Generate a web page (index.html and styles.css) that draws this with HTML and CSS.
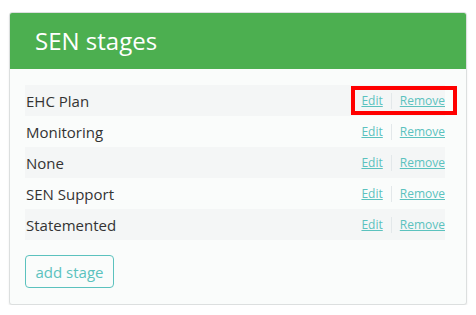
FILE: index.html
```html
<!DOCTYPE html>
<html lang="en">
<head>
    <meta charset="UTF-8">
    <meta name="viewport" content="width=device-width, initial-scale=1.0">
    <title>SEN stages</title>
    <link rel="stylesheet" href="styles.css">
</head>
<body>
    <!-- Panel -->
    <div class="panel">
        <div class="panel-heading">SEN stages</div>
        <div class="panel-body">
            <ul class="stage-list">
                <li class="stage">
                    <span class="stage-name">EHC Plan</span>
                    <span class="actions highlighted">
                        <a href="#">Edit</a><span class="sep"></span><a href="#">Remove</a>
                        <span class="mark"></span>
                    </span>
                </li>
                <li class="stage">
                    <span class="stage-name">Monitoring</span>
                    <span class="actions"><a href="#">Edit</a><span class="sep"></span><a href="#">Remove</a></span>
                </li>
                <li class="stage">
                    <span class="stage-name">None</span>
                    <span class="actions"><a href="#">Edit</a><span class="sep"></span><a href="#">Remove</a></span>
                </li>
                <li class="stage">
                    <span class="stage-name">SEN Support</span>
                    <span class="actions"><a href="#">Edit</a><span class="sep"></span><a href="#">Remove</a></span>
                </li>
                <li class="stage">
                    <span class="stage-name">Statemented</span>
                    <span class="actions"><a href="#">Edit</a><span class="sep"></span><a href="#">Remove</a></span>
                </li>
            </ul>
            <button type="button" class="btn-add">add stage</button>
        </div>
    </div>
</body>
</html>
```

FILE: styles.css
```css
body {
    font-family: 'Open Sans', sans-serif;
    color: #333;
    background: #fff;
    margin: 0;
    padding: 12px 9px 0 9px;
}
.panel {
    border: 1px solid #dcdfdf;
    border-radius: 3px;
    background-color: #fafcfb;
    box-shadow: 0 2px 2px rgba(0, 0, 0, 0.08);
    overflow: hidden;
}
.panel-heading {
    background-color: #4caf50;
    color: #fff;
    font-size: 24px;
    height: 56px;
    line-height: 56px;
    padding-left: 25px;
}
.panel-body {
    padding: 16px 21px 16px 15px;
}
.stage-list {
    list-style: none;
    margin: 0 0 15px 0;
    padding: 0;
}
.stage {
    display: flex;
    justify-content: space-between;
    align-items: center;
    height: 31px;
    padding-left: 1px;
    font-size: 15px;
}
.stage:nth-child(odd) {
    background-color: #f4f6f6;
}
.actions {
    display: flex;
    align-items: center;
    font-size: 12px;
    position: relative;
}
.actions a {
    color: #5bc2be;
}
.sep {
    width: 1px;
    height: 16px;
    background-color: #e3e8ea;
    margin: 0 8px;
}
.mark {
    position: absolute;
    left: -10px;
    right: -12px;
    top: -6px;
    bottom: -6px;
    border: 4px solid #ff0000;
}
.btn-add {
    font-family: 'Open Sans', sans-serif;
    font-size: 15px;
    color: #5bc2be;
    background: transparent;
    border: 1px solid #5bc2be;
    border-radius: 4px;
    width: 89px;
    height: 33px;
    padding: 0;
    cursor: pointer;
}
```
